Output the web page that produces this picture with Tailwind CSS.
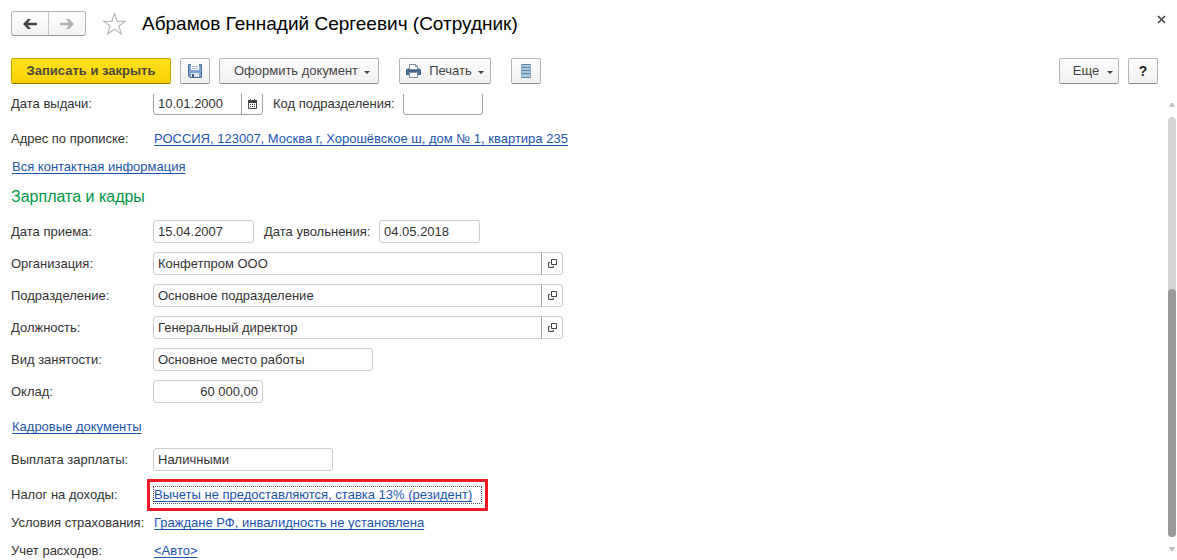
<!DOCTYPE html>
<html lang="ru">
<head>
    <meta charset="UTF-8">
    <meta name="viewport" content="width=device-width, initial-scale=1.0">
    <title>Абрамов Геннадий Сергеевич (Сотрудник)</title>
    <script src="https://cdn.jsdelivr.net/npm/@tailwindcss/browser@4"></script>
    <style>
        a {
            text-decoration-skip-ink: none;
        }
    </style>
</head>
<body class="flex h-screen flex-col overflow-hidden bg-white font-['Liberation_Sans',Arial,sans-serif] text-[13px] leading-5 text-[#333]">

    <!-- Title bar -->
    <header class="flex shrink-0 items-center pt-[11px] pr-[11px] pl-[11px]">
        <div class="flex h-[25px] rounded-[3px] border border-[#b4b4b4] border-b-[#999] bg-linear-to-b from-white to-[#f2f2f2]">
            <button type="button" aria-label="Назад" class="flex w-[37px] items-center justify-center border-r border-[#c4c4c4]">
                <svg class="h-3 w-[14px]" viewBox="0 0 14 12"><path d="M0 6 5 1H8L4.800 4.800H14V7.200H4.800L8 11H5Z" fill="#444"/></svg>
            </button>
            <button type="button" aria-label="Вперед" class="flex w-9 items-center justify-center">
                <svg class="h-3 w-[14px]" viewBox="0 0 14 12"><path d="M14 6 9 1H6L9.200 4.800H0V7.200H9.200L6 11H9Z" fill="#b0b0b0"/></svg>
            </button>
        </div>
        <button type="button" aria-label="В избранное" class="ml-4">
            <svg class="h-6 w-6" viewBox="0 0 24 24" fill="none" stroke="#b5bbc1" stroke-width="1.200"><path d="M12.500 1.500 15.200 9.300H23.300L16.900 14.100 19.300 22 12.500 17.200 5.700 22 8.100 14.100 1.700 9.300H9.800Z"/></svg>
        </button>
        <h1 class="ml-4 text-[19px] leading-6 text-black">Абрамов Геннадий Сергеевич (Сотрудник)</h1>
        <button type="button" aria-label="Закрыть" class="mb-2 ml-auto">
            <svg class="h-[9px] w-[9px]" viewBox="0 0 9 9" stroke="#4a4a4a" stroke-width="1.700"><path d="M1 1 8 8M8 1 1 8"/></svg>
        </button>
    </header>

    <!-- Command bar -->
    <div class="mt-[22px] flex h-[26px] shrink-0 gap-[9px] pr-[19px] pl-[11px] text-[#444]">
        <button type="button" class="w-40 rounded-[2px] border border-[#c5a300] border-b-[#8f7800] bg-linear-to-b from-[#ffe21a] to-[#f7d000] font-bold text-[#4d4a3c]">Записать и закрыть</button>
        <button type="button" aria-label="Записать" class="flex w-[30px] items-center justify-center rounded-[2px] border border-[#b4b4b4] border-b-[#8c8c8c] bg-linear-to-b from-white to-[#f0f0f0]">
            <svg class="h-[14px] w-[14px]" viewBox="0 0 14 14"><path d="M.5.5H13.500V13.500H2L.5 12Z" fill="#7ba3d0" stroke="#4a6f9c"/><path d="M3 0H11V6H3Z" fill="#fff"/><path d="M4 2.500H10M4 4.500H10" stroke="#a0b5cc"/><path d="M3 9H11V13H3Z" fill="#dde6f0"/><path d="M4 10H6V13H4Z" fill="#365577"/></svg>
        </button>
        <button type="button" class="flex w-40 items-center justify-center gap-[6px] rounded-[2px] border border-[#b4b4b4] border-b-[#8c8c8c] bg-linear-to-b from-white to-[#f0f0f0] pl-[6px]">Оформить документ
            <svg class="mt-[2px] h-[3px] w-[6px]" viewBox="0 0 6 3"><path d="M0 0H6L3 3Z" fill="#444"/></svg>
        </button>
        <button type="button" class="ml-[11px] flex w-[92px] items-center justify-between rounded-[2px] border border-[#b4b4b4] border-b-[#8c8c8c] bg-linear-to-b from-white to-[#f0f0f0] px-[6px]">
            <svg class="h-[14px] w-[15px]" viewBox="0 0 15 14"><path d="M1.500 5H13.500L14.500 6V10.500H.5V6Z" fill="#54799f" stroke="#2f5276"/><path d="M3.500 5.500V.5H9.500L11.500 2.500V5.500Z" fill="#fff" stroke="#7b8b9b"/><path d="M9.500.5V2.500H11.500" fill="none" stroke="#7b8b9b"/><path d="M3.500 8.500H11.500V13.500H3.500Z" fill="#fff" stroke="#7b8b9b"/><path d="M2 7H13" stroke="#2f5276"/></svg>
            <span class="ml-[2px]">Печать</span>
            <svg class="mt-[2px] h-[3px] w-[6px]" viewBox="0 0 6 3"><path d="M0 0H6L3 3Z" fill="#444"/></svg>
        </button>
        <button type="button" aria-label="Список" class="ml-[11px] flex w-[30px] items-center justify-center rounded-[2px] border border-[#b4b4b4] border-b-[#8c8c8c] bg-linear-to-b from-white to-[#f0f0f0]">
            <svg class="h-[14px] w-[10px]" viewBox="0 0 10 14"><path d="M0 0H10V14H0Z" fill="#a9c6dc"/><path d="M0 .5H10M0 3.500H10M0 6.500H10M0 9.500H10M0 13.500H10" stroke="#6487a3"/><path d="M.5 0V14M9.500 0V14" stroke="#8eabc2"/></svg>
        </button>
        <button type="button" class="ml-auto flex w-[60px] items-center justify-center gap-2 rounded-[2px] border border-[#b4b4b4] border-b-[#8c8c8c] bg-linear-to-b from-white to-[#f0f0f0] pl-2">Еще
            <svg class="mt-[3px] h-[3px] w-[6px]" viewBox="0 0 6 3"><path d="M0 0H6L3 3Z" fill="#444"/></svg>
        </button>
        <button type="button" aria-label="Справка" class="w-[30px] rounded-[2px] border border-[#b4b4b4] border-b-[#8c8c8c] bg-linear-to-b from-white to-[#f0f0f0] text-[14px] font-bold text-[#222]">?</button>
    </div>

    <!-- Scrolled form -->
    <main class="mt-[10px] flex min-h-0 flex-1">
        <form class="-mt-[2px] min-w-0 flex-1 pl-[11px] whitespace-nowrap [clip-path:inset(2px_0_0_0)]">
            <div class="flex h-[23px] items-center">
                <label for="issued" class="w-[142px] shrink-0">Дата выдачи:</label>
                <div class="flex h-full w-[110px] rounded-[3px] border border-[#a0a0a0]">
                    <input id="issued" type="text" value="10.01.2000" class="w-0 flex-1 px-1 outline-none">
                    <button type="button" aria-label="Выбрать дату" class="flex w-[21px] items-center justify-center border-l border-[#a0a0a0]">
                        <svg class="h-[10px] w-[9px]" viewBox="0 0 9 10"><path d="M.5 2V9.500H8.500V2" fill="none" stroke="#444"/><path d="M0 1H9V4H0Z" fill="#444"/><path d="M2 0H3V2H2ZM6 0H7V2H6Z" fill="#444"/><path d="M2 5.500H7M2 7.500H7" stroke="#444" stroke-dasharray="1 1"/></svg>
                    </button>
                </div>
                <label for="code" class="ml-[10px] w-[130px]">Код подразделения:</label>
                <input id="code" type="text" class="h-full w-20 rounded-[3px] border border-[#a0a0a0] px-1">
            </div>

            <div class="mt-[14px] flex flex-col gap-2">
                <div class="flex">
                    <span class="w-[143px] shrink-0">Адрес по прописке:</span>
                    <a href="#" class="text-[#1c55ae] underline underline-offset-2">РОССИЯ, 123007, Москва г, Хорошёвское ш, дом № 1, квартира 235</a>
                </div>
                <div class="flex pl-px">
                    <a href="#" class="text-[#1c55ae] underline underline-offset-2">Вся контактная информация</a>
                </div>
            </div>

            <h2 class="mt-[10px] text-[16px] leading-5 text-[#009646]">Зарплата и кадры</h2>

            <div class="mt-[13px] flex flex-col gap-[9px]">
                <div class="flex h-[23px] items-center">
                    <label for="hired" class="w-[142px] shrink-0">Дата приема:</label>
                    <input id="hired" type="text" value="15.04.2007" class="h-full w-[101px] rounded-[3px] border border-[#ccc] px-1">
                    <label for="fired" class="ml-[10px] w-[115px]">Дата увольнения:</label>
                    <input id="fired" type="text" value="04.05.2018" class="h-full w-[101px] rounded-[3px] border border-[#ccc] px-1">
                </div>
                <div class="flex h-[23px] items-center">
                    <label for="org" class="w-[142px] shrink-0">Организация:</label>
                    <div class="flex h-full w-[410px] rounded-[3px] border border-[#ccc]">
                        <input id="org" type="text" value="Конфетпром ООО" class="w-0 flex-1 px-1 outline-none">
                        <button type="button" aria-label="Открыть" class="flex w-[21px] items-center justify-center border-l border-[#a0a0a0]">
                            <svg class="h-[9px] w-[9px]" viewBox="0 0 9 9" fill="none" stroke="#444"><path d="M3.500.5H8.500V5.500H3.500ZM2 3.500H.5V8.500H5.500V7"/></svg>
                        </button>
                    </div>
                </div>
                <div class="flex h-[23px] items-center">
                    <label for="dept" class="w-[142px] shrink-0">Подразделение:</label>
                    <div class="flex h-full w-[410px] rounded-[3px] border border-[#ccc]">
                        <input id="dept" type="text" value="Основное подразделение" class="w-0 flex-1 px-1 outline-none">
                        <button type="button" aria-label="Открыть" class="flex w-[21px] items-center justify-center border-l border-[#a0a0a0]">
                            <svg class="h-[9px] w-[9px]" viewBox="0 0 9 9" fill="none" stroke="#444"><path d="M3.500.5H8.500V5.500H3.500ZM2 3.500H.5V8.500H5.500V7"/></svg>
                        </button>
                    </div>
                </div>
                <div class="flex h-[23px] items-center">
                    <label for="position" class="w-[142px] shrink-0">Должность:</label>
                    <div class="flex h-full w-[410px] rounded-[3px] border border-[#ccc]">
                        <input id="position" type="text" value="Генеральный директор" class="w-0 flex-1 px-1 outline-none">
                        <button type="button" aria-label="Открыть" class="flex w-[21px] items-center justify-center border-l border-[#a0a0a0]">
                            <svg class="h-[9px] w-[9px]" viewBox="0 0 9 9" fill="none" stroke="#444"><path d="M3.500.5H8.500V5.500H3.500ZM2 3.500H.5V8.500H5.500V7"/></svg>
                        </button>
                    </div>
                </div>
                <div class="flex h-[23px] items-center">
                    <label for="employment" class="w-[142px] shrink-0">Вид занятости:</label>
                    <input id="employment" type="text" value="Основное место работы" class="h-full w-[220px] rounded-[3px] border border-[#ccc] px-1">
                </div>
                <div class="flex h-[23px] items-center">
                    <label for="salary" class="w-[142px] shrink-0">Оклад:</label>
                    <input id="salary" type="text" value="60 000,00" class="h-full w-[110px] rounded-[3px] border border-[#ccc] px-1 text-right">
                </div>
            </div>

            <div class="mt-[14px] flex pl-px">
                <a href="#" class="text-[#1c55ae] underline underline-offset-2">Кадровые документы</a>
            </div>

            <div class="mt-[11px] flex h-[23px] items-center">
                <label for="payout" class="w-[142px] shrink-0">Выплата зарплаты:</label>
                <input id="payout" type="text" value="Наличными" class="h-full w-[180px] rounded-[3px] border border-[#ccc] px-1">
            </div>

            <div class="mt-[14px] flex flex-col gap-2">
                <div class="flex">
                    <span class="w-[142px] shrink-0">Налог на доходы:</span>
                    <div class="flex w-[329px] items-center outline-3 outline-offset-3 outline-[#ed1c24]">
                        <a href="#" class="flex-1 border border-dotted border-[#555] leading-4 text-[#1c55ae] underline underline-offset-2">Вычеты не предоставляются, ставка 13% (резидент)</a>
                    </div>
                </div>
                <div class="flex">
                    <span class="w-[143px] shrink-0">Условия страхования:</span>
                    <a href="#" class="text-[#1c55ae] underline underline-offset-2">Граждане РФ, инвалидность не установлена</a>
                </div>
                <div class="flex">
                    <span class="w-[143px] shrink-0">Учет расходов:</span>
                    <a href="#" class="text-[#1c55ae] underline underline-offset-2">&lt;Авто&gt;</a>
                </div>
            </div>
        </form>

        <!-- Scrollbar -->
        <div class="mr-px flex w-2 shrink-0 flex-col items-center pt-[9px] pb-[9px]">
            <svg class="h-1 w-[6px]" viewBox="0 0 6 4"><path d="M0 4H6L4 0H2Z" fill="#c0c0c0"/></svg>
            <div class="mt-[10px] mb-[10px] flex w-full flex-1 flex-col justify-end rounded-full bg-[#d6d6d6]">
                <div class="h-[59%] rounded-full bg-[#999]"></div>
            </div>
            <svg class="h-1 w-[6px]" viewBox="0 0 6 4"><path d="M0 0H6L4 4H2Z" fill="#c0c0c0"/></svg>
        </div>
    </main>

</body>
</html>
